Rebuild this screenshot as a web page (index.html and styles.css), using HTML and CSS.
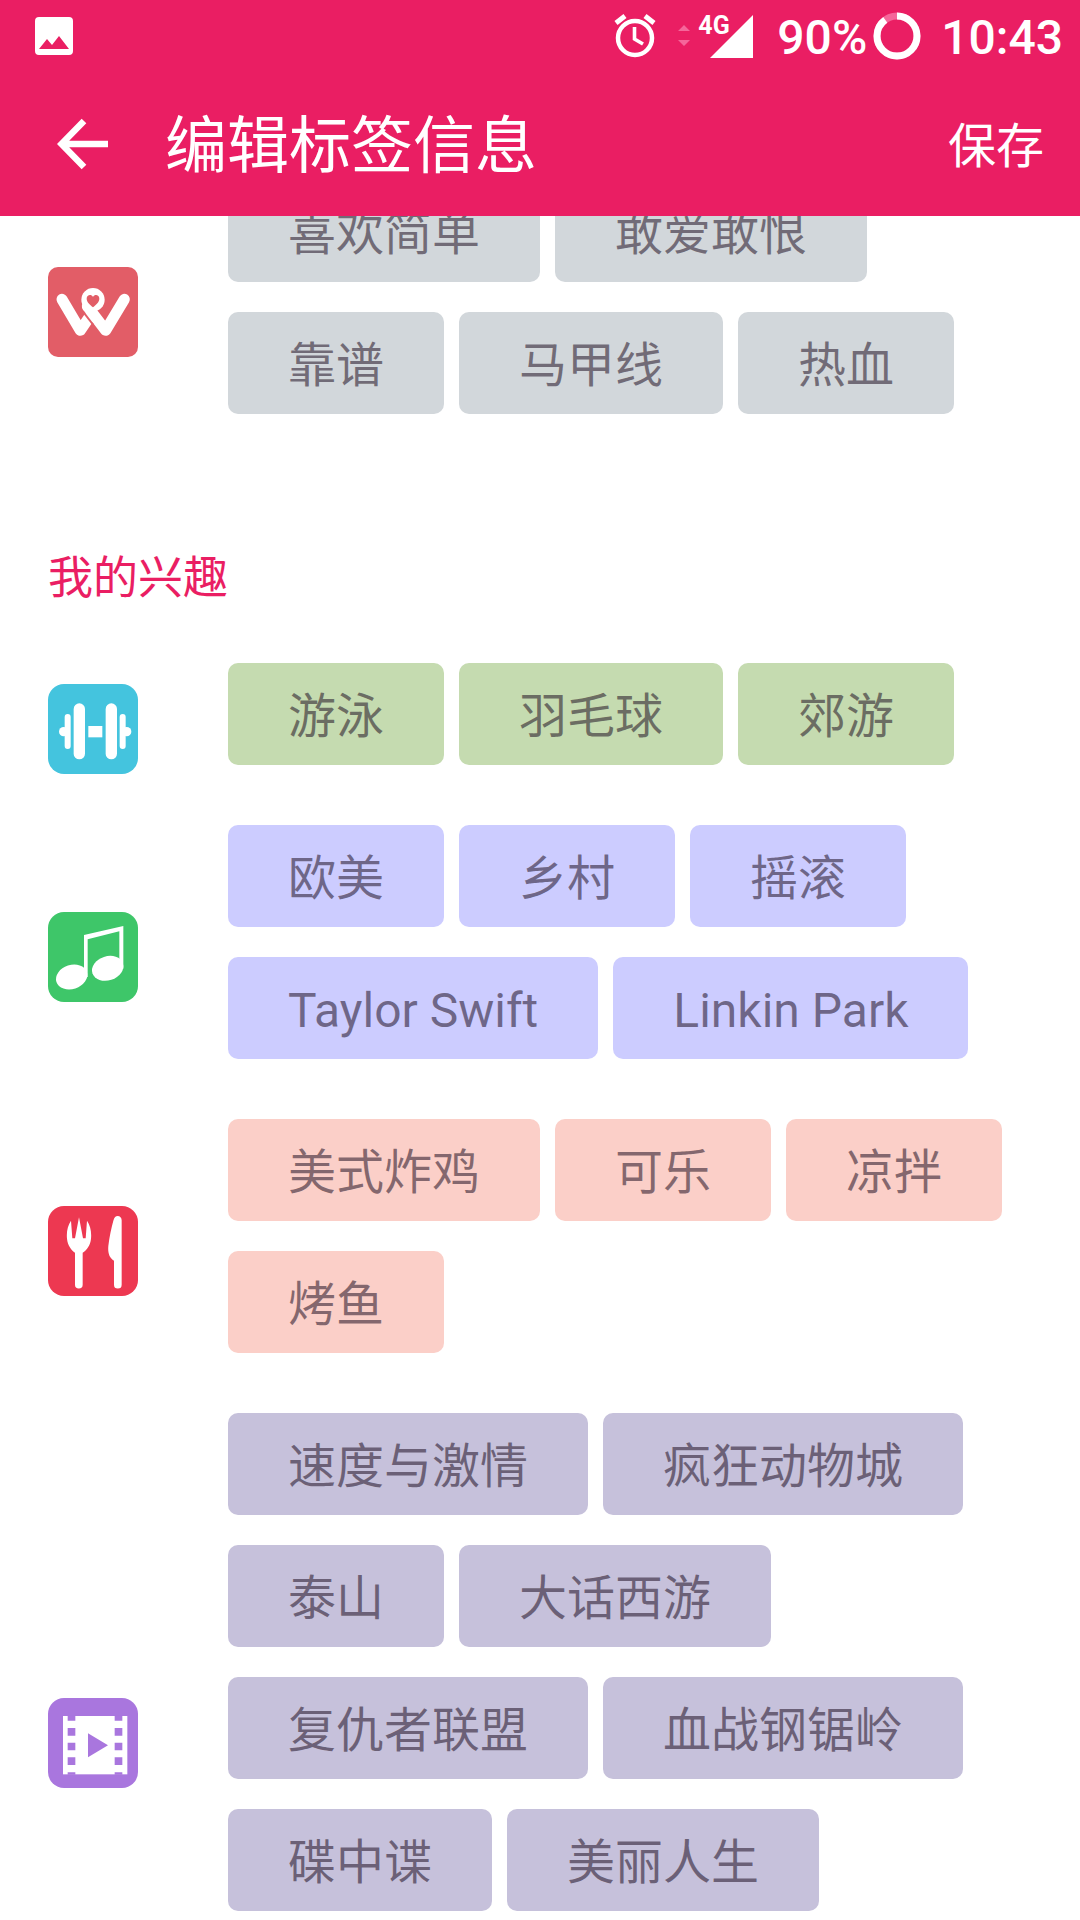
FILE: index.html
```html
<!DOCTYPE html>
<html lang="zh-CN">
<head>
<meta charset="utf-8">
<meta name="viewport" content="width=device-width, initial-scale=1">
<title>编辑标签信息</title>
<link rel="stylesheet" href="styles.css">
</head>
<body>
<header class="header">
  <div class="status">
    <svg class="status-photo" width="38" height="38" viewBox="0 0 38 38" aria-hidden="true"><path fill="#fff" fill-rule="evenodd" d="M4 0H34a4 4 0 0 1 4 4V34a4 4 0 0 1-4 4H4a4 4 0 0 1-4-4V4a4 4 0 0 1 4-4ZM4 32H34L24 19L17 28L12 22Z"/></svg>
    <svg class="status-alarm" width="42" height="44" viewBox="0 0 42 44" fill="none" stroke="#fff" aria-hidden="true"><circle cx="21" cy="24" r="17" stroke-width="4.5"/><path stroke-width="5" d="M2 9L11 2M31 2L40 9"/><path stroke-width="3.6" d="M20.500 13V25L29 30"/></svg>
    <svg class="status-data" width="12" height="22" viewBox="0 0 12 22" fill="#f5669a" aria-hidden="true"><path d="M0 6L6 0L12 6ZM0 15H12L6 21Z"/></svg>
    <span class="signal">
      <svg width="43" height="43" viewBox="0 0 43 43" fill="#fff" aria-hidden="true"><path d="M0 43L43 0V43Z"/></svg>
      <span class="network">4G</span>
    </span>
    <span class="battery">90%</span>
    <svg class="status-ring" width="48" height="48" viewBox="0 0 48 48" fill="none" stroke-width="7" aria-hidden="true"><circle cx="24" cy="24" r="20" stroke="#f5669a"/><circle cx="24" cy="24" r="20" stroke="#fff" pathLength="100" stroke-dasharray="90 10" transform="rotate(-90 24 24)"/></svg>
    <time class="clock">10:43</time>
  </div>
  <div class="appbar">
    <button class="back" type="button" aria-label="返回"><svg width="52" height="52" viewBox="0 0 52 52" fill="none" stroke="#fff" stroke-width="6.500" aria-hidden="true"><path d="M27 3L4.500 26L27 49M5 26H51"/></svg></button>
    <h1 class="title">编辑标签信息</h1>
    <button class="save" type="button">保存</button>
  </div>
</header>
<main class="content">
  <section class="group gray">
    <svg class="icon" viewBox="0 0 270 270" aria-hidden="true"><rect width="270" height="270" rx="30" fill="#e25d67"/><g fill="none" stroke="#fff" stroke-width="33" stroke-linecap="round" stroke-linejoin="round"><path d="M42 97L97 190L123 152"/><path d="M229 97L173 190L118 118"/></g><path d="M105 134L136 174" stroke="#e25d67" stroke-width="6"/><circle cx="135" cy="98" r="35" fill="#fff"/><path fill="#e25d67" d="M135 121C127 113 116 106 116 95C116 83 130 80 135 90C140 80 154 83 154 95C154 106 143 113 135 121Z"/></svg>
    <div class="chips">
      <button class="chip" type="button">喜欢简单</button>
      <button class="chip" type="button">敢爱敢恨</button>
      <button class="chip" type="button">靠谱</button>
      <button class="chip" type="button">马甲线</button>
      <button class="chip" type="button">热血</button>
    </div>
  </section>
  <h2 class="section-title">我的兴趣</h2>
  <section class="group green">
    <svg class="icon" viewBox="0 0 270 270" aria-hidden="true"><rect width="270" height="270" rx="48" fill="#44c4de"/><g fill="#fff"><circle cx="47" cy="143" r="14"/><circle cx="236" cy="143" r="14"/><rect x="50" y="90" width="18" height="105" rx="9"/><rect x="215" y="90" width="18" height="105" rx="9"/><rect x="77" y="58" width="34" height="168" rx="17"/><rect x="173" y="58" width="34" height="168" rx="17"/><rect x="121" y="126" width="42" height="34"/></g></svg>
    <div class="chips">
      <button class="chip" type="button">游泳</button>
      <button class="chip" type="button">羽毛球</button>
      <button class="chip" type="button">郊游</button>
    </div>
  </section>
  <section class="group blue">
    <svg class="icon" viewBox="0 0 270 270" aria-hidden="true"><rect width="270" height="270" rx="48" fill="#3ec669"/><g fill="#fff"><ellipse cx="71" cy="195" rx="48" ry="36" transform="rotate(-18 71 195)"/><ellipse cx="179" cy="169" rx="48" ry="36" transform="rotate(-18 179 169)"/><path d="M108 69L226 42V170H214V58L119 82V195H108Z"/></g></svg>
    <div class="chips">
      <button class="chip" type="button">欧美</button>
      <button class="chip" type="button">乡村</button>
      <button class="chip" type="button">摇滚</button>
      <button class="chip" type="button">Taylor Swift</button>
      <button class="chip" type="button">Linkin Park</button>
    </div>
  </section>
  <section class="group peach">
    <svg class="icon" viewBox="0 0 270 270" aria-hidden="true"><rect width="270" height="270" rx="48" fill="#ed3851"/><path fill="#fff" d="M69 44C59 58 55 78 57 98C59 118 70 132 81 140V236a11.500 11.500 0 0 0 23 0V140C116 132 127 118 129 98C131 78 127 58 117 44L113 97H105L93 34L81 97H73ZM209 30C216 30 221 35 221 43V236a11.500 11.500 0 0 1-23 0V164C184 156 179 140 181 120C184 92 190 66 196 44C199 34 203 30 209 30Z"/></svg>
    <div class="chips">
      <button class="chip" type="button">美式炸鸡</button>
      <button class="chip" type="button">可乐</button>
      <button class="chip" type="button">凉拌</button>
      <button class="chip" type="button">烤鱼</button>
    </div>
  </section>
  <section class="group violet tall">
    <svg class="icon" viewBox="0 0 270 270" aria-hidden="true"><rect width="270" height="270" rx="48" fill="#a976de"/><rect x="45" y="54" width="193" height="175" fill="#fff"/><path fill="#a976de" d="M59 53h23v15h-23zM59 90h23v23h-23zM59 134h23v23h-23zM59 178h23v23h-23zM59 223h23v7h-23zM200 53h23v15h-23zM200 90h23v23h-23zM200 134h23v23h-23zM200 178h23v23h-23zM200 223h23v7h-23zM120 106L180 142L120 178Z"/></svg>
    <div class="chips">
      <button class="chip" type="button">速度与激情</button>
      <button class="chip" type="button">疯狂动物城</button>
      <button class="chip" type="button">泰山</button>
      <button class="chip" type="button">大话西游</button>
      <button class="chip" type="button">复仇者联盟</button>
      <button class="chip" type="button">血战钢锯岭</button>
      <button class="chip" type="button">碟中谍</button>
      <button class="chip" type="button">美丽人生</button>
    </div>
  </section>
</main>
</body>
</html>
```
FILE: styles.css
```css
* {
  box-sizing: border-box;
}

body {
  margin: 0;
  height: 100vh;
  overflow: hidden;
  display: flex;
  flex-direction: column;
  background: #fff;
  font-family: Roboto, "Noto Sans CJK SC", sans-serif;
}

button {
  border: 0;
  padding: 0;
  background: none;
  color: inherit;
  font: inherit;
  cursor: pointer;
}

svg {
  display: block;
  flex: none;
}

.header {
  flex: none;
  position: relative;
  z-index: 1;
  background: #ea1e63;
  color: #fff;
}

.status {
  display: flex;
  align-items: center;
  height: 72px;
  padding: 0 17px 0 35px;
  font-size: 48px;
  font-weight: 500;
  line-height: 72px;
}

.status-alarm {
  margin-left: auto;
}

.status-data {
  margin-left: 22px;
}

.signal {
  position: relative;
  margin-left: 20px;
}

.network {
  position: absolute;
  top: 0;
  left: -12px;
  font-size: 25px;
  font-weight: 700;
  line-height: 22px;
}

.battery,
.clock {
  padding-top: 3px;
}

.battery {
  margin-left: 24px;
}

.status-ring {
  margin-left: 6px;
}

.clock {
  margin-left: 20px;
}

.appbar {
  display: flex;
  align-items: center;
  height: 144px;
  padding: 0 36px 0 57px;
}

.title {
  flex: 1;
  margin: 0 0 0 56px;
  padding-top: 5px;
  font-size: 62px;
  font-weight: 400;
  line-height: 72px;
}

.save {
  padding-top: 5px;
  font-size: 48px;
  line-height: 72px;
}

/* The list is scrolled slightly under the header. */
.content {
  flex: 1;
  min-height: 0;
  margin-top: -36px;
  padding: 0 48px;
  overflow: hidden;
}

.group {
  display: flex;
  align-items: center;
  gap: 90px;
  margin-bottom: 30px;
}

.tall {
  min-height: 660px;
}

.icon {
  width: 90px;
  height: 90px;
}

.chips {
  flex: 1;
  align-self: stretch;
  display: flex;
  flex-wrap: wrap;
  align-content: flex-start;
  gap: 30px 15px;
  padding-bottom: 30px;
}

.chip {
  height: 102px;
  padding: 5px 60px 0;
  border-radius: 10px;
  color: rgba(28, 12, 32, 0.54);
  font-size: 48px;
  line-height: 72px;
}

.gray .chip {
  background: #d2d7db;
}

.green .chip {
  background: #c5dbb0;
}

.blue .chip {
  background: #ccccff;
}

.peach .chip {
  background: #fbcfc8;
}

.violet .chip {
  background: #c6c1db;
}

.section-title {
  margin: 0;
  padding: 69px 0 48px;
  color: #ea1e63;
  font-size: 45px;
  font-weight: 400;
  line-height: 72px;
}
```
